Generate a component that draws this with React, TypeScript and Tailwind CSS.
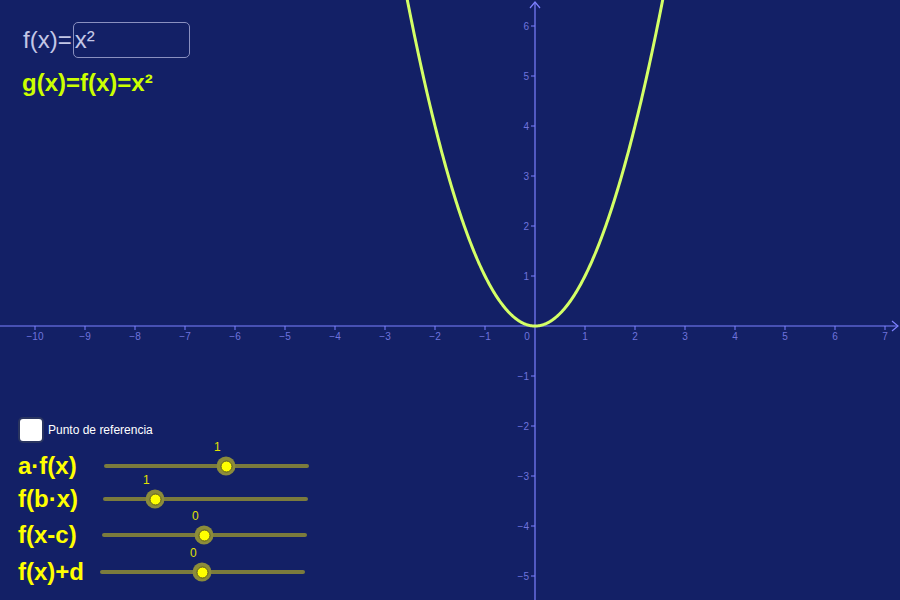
import React from 'react';

const OX = 535;
const OY = 326;
const U = 50;

const AXIS = '#7d80ff';
const LABEL = '#6f74dd';

const parabola = (() => {
    const pts: string[] = [];
    for (let i = -2.6; i <= 2.6001; i += 0.02) {
        pts.push(`${(OX + U * i).toFixed(2)},${(OY - U * i * i).toFixed(2)}`);
    }
    return 'M' + pts.join(' L');
})();

const fmt = (n: number) => (n < 0 ? `\u2212${-n}` : `${n}`);

const Graph = () => {
    const xs = [-10, -9, -8, -7, -6, -5, -4, -3, -2, -1, 1, 2, 3, 4, 5, 6, 7];
    const ys = [6, 5, 4, 3, 2, 1, -1, -2, -3, -4, -5];
    return (
        <svg width={900} height={600} className="absolute inset-0" style={{ fontFamily: '"Liberation Sans", Arial, sans-serif' }}>
            {/* axes */}
            <line x1={0} y1={OY} x2={898} y2={OY} stroke={AXIS} strokeWidth={1.2} />
            <polyline points={`892,${OY - 5} 898,${OY} 892,${OY + 5}`} fill="none" stroke={AXIS} strokeWidth={1.2} />
            <line x1={OX} y1={2} x2={OX} y2={600} stroke={AXIS} strokeWidth={1.2} />
            <polyline points={`${OX - 5},8 ${OX},2 ${OX + 5},8`} fill="none" stroke={AXIS} strokeWidth={1.2} />

            {xs.map(n => (
                <g key={`x${n}`}>
                    <line x1={OX + n * U} y1={OY} x2={OX + n * U} y2={OY + 4} stroke={AXIS} strokeWidth={1} />
                    <text x={OX + n * U} y={OY + 14} fontSize={10} fill={LABEL} textAnchor="middle">{fmt(n)}</text>
                </g>
            ))}
            <text x={OX - 8} y={OY + 14} fontSize={10} fill={LABEL} textAnchor="middle">0</text>

            {ys.map(n => (
                <g key={`y${n}`}>
                    <line x1={OX - 4} y1={OY - n * U} x2={OX} y2={OY - n * U} stroke={AXIS} strokeWidth={1} />
                    <text x={OX - 6} y={OY - n * U + 3.5} fontSize={10} fill={LABEL} textAnchor="end">{fmt(n)}</text>
                </g>
            ))}

            <path d={parabola} fill="none" stroke="#d4ff66" strokeWidth={3} strokeLinejoin="round" />
        </svg>
    );
};

interface SliderRow {
    label: string;
    value: string;
    rowClass: string;
    trackClass: string;
    knobClass: string;
    valueClass: string;
}

const SLIDERS: SliderRow[] = [
    { label: 'a·f(x)', value: '1', rowClass: 'mt-[8px]', trackClass: 'ml-[20px]', knobClass: 'left-[122px]', valueClass: 'left-[110px]' },
    { label: 'f(b·x)', value: '1', rowClass: 'mt-[3px]', trackClass: 'ml-[19px]', knobClass: 'left-[52px]', valueClass: 'left-[40px]' },
    { label: 'f(x-c)', value: '0', rowClass: 'mt-[6px]', trackClass: 'ml-[18px]', knobClass: 'left-[102px]', valueClass: 'left-[90px]' },
    { label: 'f(x)+d', value: '0', rowClass: 'mt-[7px]', trackClass: 'ml-[16px]', knobClass: 'left-[102px]', valueClass: 'left-[90px]' },
];

export default function App() {
    return (
        <div className="relative w-[900px] h-[600px] overflow-hidden bg-[#132066] font-['Liberation_Sans',Arial,sans-serif]">
            <Graph />

            {/* function input */}
            <div className="absolute left-[23px] top-[22px] flex flex-col">
                <div className="flex items-center h-[36px]">
                    <span className="text-[24px] leading-none text-[#c3c7e6]">f(x)=</span>
                    <div className="w-[117px] h-[36px] ml-[1px] rounded-[5px] border border-[#8a90c0] flex items-center pl-[1px]">
                        <span className="text-[24px] leading-none text-[#c3c7e6]">x²</span>
                    </div>
                </div>
                <div className="-ml-[1px] mt-[13px] text-[24px] leading-none font-bold text-[#ccff00]">g(x)=f(x)=x²</div>
            </div>

            {/* sliders */}
            <div className="absolute left-[18px] top-[417px] flex flex-col">
                <div className="flex items-center gap-[4px] h-[26px]">
                    <div className="w-[26px] h-[26px] rounded-[5px] bg-white border-2 border-[#2a3560]" />
                    <span className="text-[12px] text-white">Punto de referencia</span>
                </div>
                {SLIDERS.map(s => (
                    <div key={s.label} className={`flex items-center h-[30px] ${s.rowClass}`}>
                        <span className="w-[66px] text-[24px] leading-none font-bold text-[#ffff00] whitespace-nowrap">{s.label}</span>
                        <div className={`relative w-[205px] h-[4px] rounded-full bg-[#7b7b3d] ${s.trackClass}`}>
                            <span className={`absolute -top-[26px] text-[12px] text-[#e0e000] ${s.valueClass}`}>{s.value}</span>
                            <div className={`absolute top-1/2 -translate-x-1/2 -translate-y-1/2 w-[19px] h-[19px] rounded-full bg-[#8c8c3a] flex items-center justify-center ${s.knobClass}`}>
                                <div className="w-[12px] h-[12px] rounded-full bg-[#ffff00] border border-[#5a5a20]" />
                            </div>
                        </div>
                    </div>
                ))}
            </div>
        </div>
    );
}
